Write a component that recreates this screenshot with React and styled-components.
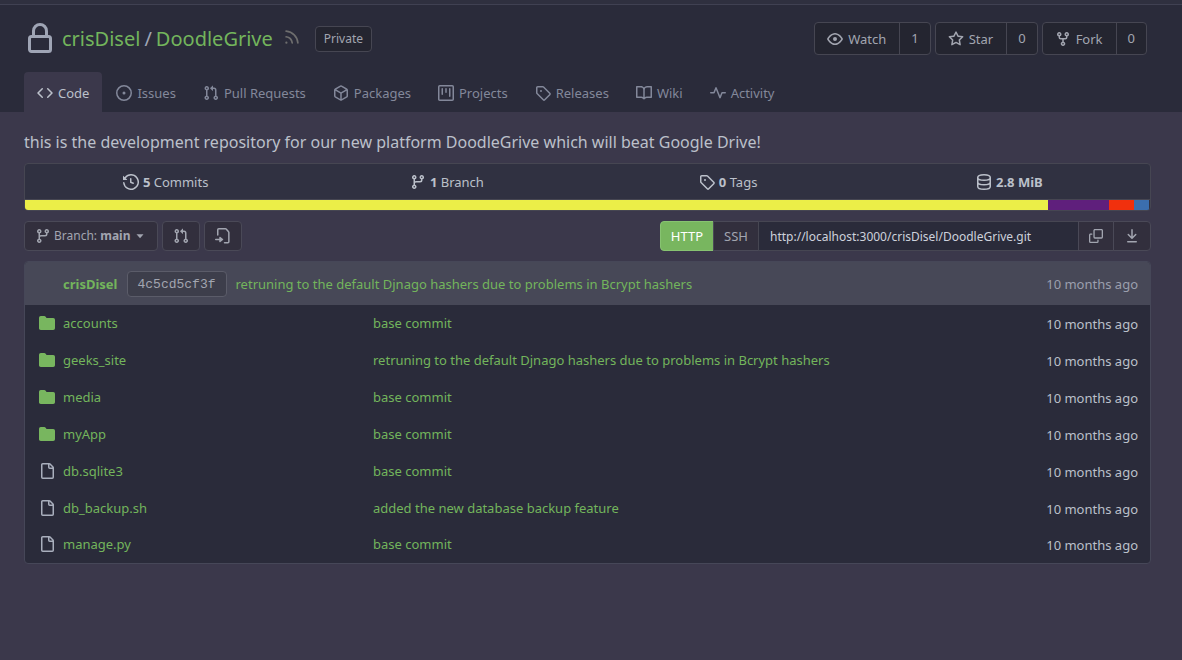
import React from 'react';
import styled, { createGlobalStyle, css } from 'styled-components';

const Global = createGlobalStyle`
  *, *::before, *::after { box-sizing: border-box; }
  body {
    margin: 0;
    background: #3b384b;
    color: #bbc0ca;
    font: 13px/20px "Noto Sans", sans-serif;
  }
  button, input { font: inherit; color: inherit; }
  button { cursor: pointer; }
  a { color: #73b55c; text-decoration: none; }
  a:hover { text-decoration: underline; }
`;

const paths = {
  lock: 'M4 4v2h-.25A1.75 1.75 0 002 7.75v5.5c0 .966.784 1.75 1.75 1.75h8.5A1.75 1.75 0 0014 13.25v-5.5A1.75 1.75 0 0012.25 6H12V4a4 4 0 10-8 0zm6.5 2V4a2.5 2.5 0 10-5 0v2h5zM12 7.5h.25a.25.25 0 01.25.25v5.5a.25.25 0 01-.25.25h-8.5a.25.25 0 01-.25-.25v-5.5a.25.25 0 01.25-.25H12z',
  rss: 'M2.002 2.725a.75.75 0 01.797-.699C8.79 2.42 13.58 7.21 13.974 13.201a.75.75 0 11-1.497.098 10.502 10.502 0 00-9.776-9.776.75.75 0 01-.7-.798zM2 13a1 1 0 112 0 1 1 0 01-2 0zm.84-5.95a.75.75 0 00-.179 1.489c2.509.3 4.5 2.291 4.8 4.8a.75.75 0 101.49-.178A7.003 7.003 0 002.838 7.05z',
  eye: 'M1.679 7.932c.412-.621 1.242-1.75 2.366-2.717C5.175 4.242 6.527 3.5 8 3.5c1.473 0 2.824.742 3.955 1.715 1.124.967 1.954 2.096 2.366 2.717a.119.119 0 010 .136c-.412.621-1.242 1.75-2.366 2.717C10.825 11.758 9.473 12.5 8 12.5c-1.473 0-2.824-.742-3.955-1.715C2.92 9.818 2.09 8.69 1.679 8.068a.119.119 0 010-.136zM8 2c-1.981 0-3.67.992-4.933 2.078C1.797 5.169.88 6.423.43 7.1a1.619 1.619 0 000 1.798c.45.678 1.367 1.932 2.637 3.024C4.329 13.008 6.019 14 8 14c1.981 0 3.67-.992 4.933-2.078 1.27-1.091 2.187-2.345 2.637-3.023a1.619 1.619 0 000-1.798c-.45-.678-1.367-1.932-2.637-3.023C11.671 2.992 9.981 2 8 2zm0 8a2 2 0 100-4 2 2 0 000 4z',
  star: 'M8 .25a.75.75 0 01.673.418l1.882 3.815 4.21.612a.75.75 0 01.416 1.279l-3.046 2.97.719 4.192a.75.75 0 01-1.088.791L8 12.347l-3.766 1.98a.75.75 0 01-1.088-.79l.72-4.194L.818 6.374a.75.75 0 01.416-1.28l4.21-.611L7.327.668A.75.75 0 018 .25zm0 2.445L6.615 5.5a.75.75 0 01-.564.41l-3.097.45 2.24 2.184a.75.75 0 01.216.664l-.528 3.084 2.769-1.456a.75.75 0 01.698 0l2.77 1.456-.53-3.084a.75.75 0 01.216-.664l2.24-2.183-3.096-.45a.75.75 0 01-.564-.41L8 2.694v.001z',
  fork: 'M5 3.25a.75.75 0 11-1.5 0 .75.75 0 011.5 0zm0 2.122a2.25 2.25 0 10-1.5 0v.878A2.25 2.25 0 005.75 8.5h1.5v2.128a2.251 2.251 0 101.5 0V8.5h1.5a2.25 2.25 0 002.25-2.25v-.878a2.25 2.25 0 10-1.5 0v.878a.75.75 0 01-.75.75h-4.5A.75.75 0 015 6.25v-.878zm3.75 7.378a.75.75 0 11-1.5 0 .75.75 0 011.5 0zm3-8.75a.75.75 0 100-1.5.75.75 0 000 1.5z',
  code: 'M4.72 3.22a.75.75 0 011.06 1.06L2.06 8l3.72 3.72a.75.75 0 11-1.06 1.06L.47 8.53a.75.75 0 010-1.06l4.25-4.25zm6.56 0a.75.75 0 10-1.06 1.06L13.94 8l-3.72 3.72a.75.75 0 101.06 1.06l4.25-4.25a.75.75 0 000-1.06l-4.25-4.25z',
  issue: 'M8 9.5a1.5 1.5 0 100-3 1.5 1.5 0 000 3zM8 0a8 8 0 100 16A8 8 0 008 0zM1.5 8a6.5 6.5 0 1113 0 6.5 6.5 0 01-13 0z',
  pull: 'M7.177 3.073L9.573.677A.25.25 0 0110 .854v4.792a.25.25 0 01-.427.177L7.177 3.427a.25.25 0 010-.354zM3.75 2.5a.75.75 0 100 1.5.75.75 0 000-1.5zm-2.25.75a2.25 2.25 0 113 2.122v5.256a2.251 2.251 0 11-1.5 0V5.372A2.25 2.25 0 011.5 3.25zM11 2.5h-1V4h1a1 1 0 011 1v5.628a2.251 2.251 0 101.5 0V5A2.5 2.5 0 0011 2.5zm1 10.25a.75.75 0 111.5 0 .75.75 0 01-1.5 0zM3.75 12a.75.75 0 100 1.5.75.75 0 000-1.5z',
  pkg: 'M8.878.392a1.75 1.75 0 00-1.756 0l-5.25 3.045A1.75 1.75 0 001 4.951v6.098c0 .624.332 1.2.872 1.514l5.25 3.045a1.75 1.75 0 001.756 0l5.25-3.045c.54-.313.872-.89.872-1.514V4.951c0-.624-.332-1.2-.872-1.514L8.878.392zM7.875 1.69a.25.25 0 01.25 0l4.63 2.685L8 7.133 3.245 4.375l4.63-2.685zM2.5 5.677v5.372c0 .09.047.171.125.216l4.625 2.683V8.432L2.5 5.677zm6.25 8.271l4.625-2.683a.25.25 0 00.125-.216V5.677L8.75 8.432v5.516z',
  project: 'M1.75 0A1.75 1.75 0 000 1.75v12.5C0 15.216.784 16 1.75 16h12.5A1.75 1.75 0 0016 14.25V1.75A1.75 1.75 0 0014.25 0H1.75zM1.5 1.75a.25.25 0 01.25-.25h12.5a.25.25 0 01.25.25v12.5a.25.25 0 01-.25.25H1.75a.25.25 0 01-.25-.25V1.75zM11.75 3a.75.75 0 00-.75.75v7.5a.75.75 0 001.5 0v-7.5a.75.75 0 00-.75-.75zm-8.25.75a.75.75 0 011.5 0v5.5a.75.75 0 01-1.5 0v-5.5zM8 3a.75.75 0 00-.75.75v3.5a.75.75 0 001.5 0v-3.5A.75.75 0 008 3z',
  tag: 'M2.5 7.775V2.75a.25.25 0 01.25-.25h5.025a.25.25 0 01.177.073l6.25 6.25a.25.25 0 010 .354l-5.025 5.025a.25.25 0 01-.354 0l-6.25-6.25a.25.25 0 01-.073-.177zm-1.5 0V2.75C1 1.784 1.784 1 2.75 1h5.025c.464 0 .91.184 1.238.513l6.25 6.25a1.75 1.75 0 010 2.474l-5.026 5.026a1.75 1.75 0 01-2.474 0l-6.25-6.25A1.75 1.75 0 011 7.775zM6 5a1 1 0 100 2 1 1 0 000-2z',
  book: 'M0 1.75A.75.75 0 01.75 1h4.253c1.227 0 2.317.59 3 1.501A3.744 3.744 0 0111.006 1h4.245a.75.75 0 01.75.75v10.5a.75.75 0 01-.75.75h-4.507a2.25 2.25 0 00-1.591.659l-.622.621a.75.75 0 01-1.06 0l-.622-.621A2.25 2.25 0 005.258 13H.75a.75.75 0 01-.75-.75V1.75zm8.755 3a2.25 2.25 0 012.25-2.25H14.5v9h-3.757c-.71 0-1.4.201-1.992.572l.004-7.322zm-1.504 7.324l.004-5.073-.002-2.253A2.25 2.25 0 005.003 2.5H1.5v9h3.757a3.75 3.75 0 011.994.574z',
  pulse: 'M6 2a.75.75 0 01.696.471L10 10.731l1.304-3.26A.75.75 0 0112 7h3.25a.75.75 0 010 1.5h-2.742l-1.812 4.528a.75.75 0 01-1.392 0L6 4.77 4.696 8.03A.75.75 0 014 8.5H.75a.75.75 0 010-1.5h2.742l1.812-4.529A.75.75 0 016 2z',
  history: 'M1.643 3.143L.427 1.927A.25.25 0 000 2.104V5.75c0 .138.112.25.25.25h3.646a.25.25 0 00.177-.427L2.715 4.215a6.5 6.5 0 11-1.18 4.458.75.75 0 10-1.493.154 8.001 8.001 0 101.6-5.684zM7.75 4a.75.75 0 01.75.75v2.992l2.028.812a.75.75 0 01-.557 1.392l-2.5-1A.75.75 0 017 8.25v-3.5A.75.75 0 017.75 4z',
  branch: 'M11.75 2.5a.75.75 0 100 1.5.75.75 0 000-1.5zm-2.25.75a2.25 2.25 0 113 2.122V6A2.5 2.5 0 0110 8.5H6a1 1 0 00-1 1v1.128a2.251 2.251 0 11-1.5 0V5.372a2.25 2.25 0 111.5 0v1.836A2.492 2.492 0 016 7h4a1 1 0 001-1v-.628A2.25 2.25 0 019.5 3.25zM4.25 12a.75.75 0 100 1.5.75.75 0 000-1.5zM3.5 3.25a.75.75 0 111.5 0 .75.75 0 01-1.5 0z',
  copy: 'M0 6.75C0 5.784.784 5 1.75 5h1.5a.75.75 0 010 1.5h-1.5a.25.25 0 00-.25.25v7.5c0 .138.112.25.25.25h7.5a.25.25 0 00.25-.25v-1.5a.75.75 0 011.5 0v1.5A1.75 1.75 0 019.25 16h-7.5A1.75 1.75 0 010 14.25v-7.5zM5 1.75C5 .784 5.784 0 6.75 0h7.5C15.216 0 16 .784 16 1.75v7.5A1.75 1.75 0 0114.25 11h-7.5A1.75 1.75 0 015 9.25v-7.5zm1.75-.25a.25.25 0 00-.25.25v7.5c0 .138.112.25.25.25h7.5a.25.25 0 00.25-.25v-7.5a.25.25 0 00-.25-.25h-7.5z',
  download: 'M7.47 10.78a.75.75 0 001.06 0l3.75-3.75a.75.75 0 00-1.06-1.06L8.75 8.44V1.75a.75.75 0 00-1.5 0v6.69L4.78 5.97a.75.75 0 00-1.06 1.06l3.75 3.75zM3.75 13a.75.75 0 000 1.5h8.5a.75.75 0 000-1.5h-8.5z',
  folder: 'M1.75 1A1.75 1.75 0 000 2.75v10.5C0 14.216.784 15 1.75 15h12.5A1.75 1.75 0 0016 13.25v-8.5A1.75 1.75 0 0014.25 3h-6.5a.25.25 0 01-.2-.1l-.9-1.2c-.33-.44-.85-.7-1.4-.7h-3.5z',
  file: 'M2 1.75C2 .784 2.784 0 3.75 0h6.586c.464 0 .909.184 1.237.513l2.914 2.914c.329.328.513.773.513 1.237v9.586A1.75 1.75 0 0113.25 16h-9.5A1.75 1.75 0 012 14.25V1.75zm1.75-.25a.25.25 0 00-.25.25v12.5c0 .138.112.25.25.25h9.5a.25.25 0 00.25-.25V6h-2.75A1.75 1.75 0 019 4.25V1.5H3.75zm6.75.062V4.25c0 .138.112.25.25.25h2.688a.252.252 0 00-.011-.013l-2.914-2.914a.272.272 0 00-.013-.011z',
  caret: 'M4 6h8l-4 4.5z',
};

const strokes = {
  database: 'M1.75 3.5C1.75 1.98 4.55.75 8 .75s6.25 1.23 6.25 2.75S11.45 6.25 8 6.25 1.75 5.02 1.75 3.5zv9c0 1.52 2.8 2.75 6.25 2.75s6.25-1.23 6.25-2.75v-9M1.75 8c0 1.52 2.8 2.75 6.25 2.75S14.25 9.52 14.25 8',
  gotoFile: 'M2.75 7V1.75a1 1 0 011-1h6.7a1 1 0 01.7.3l2.4 2.8a1 1 0 01.3.7v9.2a1 1 0 01-1 1H9.5M.75 11.5H6M5 9.5l2.5 2L5 13.5z',
};

const Svg = styled.svg`
  display: block;
  flex: none;
  width: ${(p) => p.$size}px;
  height: ${(p) => p.$size}px;
  fill: currentColor;
`;

function Icon({ name, size = 16 }) {
  return (
    <Svg viewBox="0 0 16 16" $size={size} aria-hidden="true">
      {paths[name] ? (
        <path fillRule="evenodd" d={paths[name]} />
      ) : (
        <path d={strokes[name]} fill="none" stroke="currentColor" strokeWidth="1.5" strokeLinecap="round" strokeLinejoin="round" />
      )}
    </Svg>
  );
}

const Header = styled.header`
  background: #2a2b3a;
`;

const TopBar = styled.div`
  height: 5px;
  background: #2f303f;
  border-bottom: 1px solid #404152;
`;

const Container = styled.div`
  padding: 0 31px 0 24px;
`;

const TitleRow = styled.div`
  display: flex;
  align-items: center;
  justify-content: space-between;
  height: 67px;
  padding-right: 4px;
`;

const Title = styled.div`
  display: flex;
  align-items: center;
  color: #9fa5b5;
`;

const RepoName = styled.h1`
  margin: 0 10px 0 6px;
  font-size: 20px;
  line-height: 32px;
  font-weight: 400;
`;

const Slash = styled.span`
  margin: 0 4px;
`;

const FeedLink = styled.a`
  padding-bottom: 4px;
  color: #6e6e6e;
`;

const Label = styled.span`
  margin-left: 14px;
  padding: 2px 8px;
  border: 1px solid #464652;
  border-radius: 4px;
  background: #242530;
  color: #a2a5b0;
  font-size: 12px;
  line-height: 20px;
`;

const Actions = styled.div`
  display: flex;
  gap: 4px;
`;

const Split = styled.div`
  display: flex;
  border: 1px solid #464652;
  border-radius: 4px;
  background: #242530;
  color: #a2a5b0;
`;

const ActionButton = styled.button`
  display: flex;
  align-items: center;
  gap: 5px;
  height: 31px;
  padding: 0 13px 0 12px;
  border: 0;
  background: none;
  font-size: 13px;
`;

const Count = styled.a`
  padding: 0 11px;
  border-left: 1px solid #464652;
  color: inherit;
  line-height: 31px;
`;

const Tabs = styled.nav`
  display: flex;
  gap: 1px;
`;

const Tab = styled.a`
  display: flex;
  align-items: center;
  gap: 5px;
  height: 40px;
  padding: 1px 13px 0;
  border-radius: 4px 4px 0 0;
  color: #83889a;
  ${(p) =>
    p.$active &&
    css`
      background: #3b384b;
      color: #bbc0ca;
    `}
`;

const Description = styled.p`
  margin: 0;
  padding: 19px 0 10px;
  font-size: 16px;
  line-height: 22px;
`;

const Stats = styled.section`
  border: 1px solid #464652;
  border-radius: 4px;
  overflow: hidden;
  background: #303141;
`;

const StatRow = styled.div`
  display: grid;
  grid-template-columns: repeat(4, 1fr);
  height: 35px;
`;

const Stat = styled.a`
  display: flex;
  align-items: center;
  justify-content: center;
  gap: 4px;
  color: #bbc0ca;
`;

const LanguageBar = styled.div`
  display: flex;
  height: 11px;
  padding-right: 1px;
  border-top: 1px solid #464652;
`;

const Language = styled.div`
  flex: ${(p) => p.$share} 0 0;
  background: ${(p) => p.$color};
`;

const Toolbar = styled.div`
  display: flex;
  justify-content: space-between;
  padding: 10px 0;
`;

const ToolGroup = styled.div`
  display: flex;
  gap: 4px;
`;

const ToolButton = styled.button`
  display: flex;
  align-items: center;
  justify-content: center;
  gap: 3px;
  height: 30px;
  padding: 0 10px;
  border: 1px solid #4a4957;
  border-radius: 4px;
  background: #322f3d;
  color: #a2a5b0;
  font-size: 12px;
`;

const CloneGroup = styled.div`
  display: flex;

  & > * { border-radius: 0; margin-left: -1px; }
  & > :first-child { border-radius: 4px 0 0 4px; margin-left: 0; }
  & > :last-child { border-radius: 0 4px 4px 0; }
`;

const CloneButton = styled(ToolButton)`
  font-size: 13px;
  ${(p) =>
    p.$active &&
    css`
      border-color: #87c371;
      background: #78b65f;
      color: #fff;
    `}
`;

const CloneUrl = styled.input`
  width: 321px;
  height: 30px;
  padding: 0 11px;
  border: 1px solid #464652;
  background: #2a2b3a;
  color: #ced2dc;
  font-size: 12px;
  outline: 0;
`;

const Files = styled.section`
  border: 1px solid #464758;
  border-radius: 4px;
  overflow: hidden;
  background: #2a2b3a;
`;

const Commit = styled.div`
  display: flex;
  align-items: center;
  height: 43px;
  padding: 0 12px 0 38px;
  background: #474857;
`;

const Sha = styled.a`
  margin: 0 9px;
  padding: 3px 10px 1px;
  border: 1px solid #5b5c69;
  border-radius: 4px;
  background: #3d3e4b;
  color: #a2a5b0;
  font: 13px/20px "Liberation Mono", monospace;
`;

const Age = styled.span`
  margin-left: auto;
  color: #9b9fad;
`;

const Table = styled.table`
  width: 100%;
  table-layout: fixed;
  border-collapse: collapse;

  tr:last-child td { height: 36px; }
`;

const Cell = styled.td`
  height: 37px;
  padding: 0 12px 2px 14px;
  width: ${(p) => p.$width || 'auto'};
`;

const AgeCell = styled(Cell)`
  padding-bottom: 0;
  text-align: right;
`;

const Entry = styled.span`
  display: flex;
  align-items: center;
  gap: 8px;
  color: ${(p) => (p.$folder ? '#78b65f' : '#a9afbd')};
`;

const tabs = [
  ['code', 'Code'],
  ['issue', 'Issues'],
  ['pull', 'Pull Requests'],
  ['pkg', 'Packages'],
  ['project', 'Projects'],
  ['tag', 'Releases'],
  ['book', 'Wiki'],
  ['pulse', 'Activity'],
];

const actions = [
  ['eye', 'Watch', 1],
  ['star', 'Star', 0],
  ['fork', 'Fork', 0],
];

const stats = [
  ['history', '5', ' Commits'],
  ['branch', '1', ' Branch'],
  ['tag', '0', ' Tags'],
  ['database', '2.8 MiB', ''],
];

const languages = [
  ['#ebee48', 1023],
  ['#5f1f7c', 61],
  ['#f1300d', 25],
  ['#3b6eae', 15],
];

const hashers = 'retruning to the default Djnago hashers due to problems in Bcrypt hashers';

const files = [
  ['folder', 'accounts', 'base commit'],
  ['folder', 'geeks_site', hashers],
  ['folder', 'media', 'base commit'],
  ['folder', 'myApp', 'base commit'],
  ['file', 'db.sqlite3', 'base commit'],
  ['file', 'db_backup.sh', 'added the new database backup feature'],
  ['file', 'manage.py', 'base commit'],
];

export default function App() {
  return (
    <>
      <Global />
      <Header>
        <TopBar />
        <Container>
          <TitleRow>
            <Title>
              <Icon name="lock" size={32} />
              <RepoName>
                <a href="#owner">crisDisel</a>
                <Slash>/</Slash>
                <a href="#repo">DoodleGrive</a>
              </RepoName>
              <FeedLink href="#feed" aria-label="RSS feed"><Icon name="rss" size={18} /></FeedLink>
              <Label>Private</Label>
            </Title>
            <Actions>
              {actions.map(([icon, label, count]) => (
                <Split key={label}>
                  <ActionButton type="button"><Icon name={icon} />{label}</ActionButton>
                  <Count href={`#${icon}`}>{count}</Count>
                </Split>
              ))}
            </Actions>
          </TitleRow>
          <Tabs>
            {tabs.map(([icon, label], i) => (
              <Tab key={label} href={`#${icon}`} $active={i === 0}><Icon name={icon} />{label}</Tab>
            ))}
          </Tabs>
        </Container>
      </Header>
      <Container as="main">
        <Description>
          this is the development repository for our new platform DoodleGrive which will beat Google Drive!
        </Description>
        <Stats>
          <StatRow>
            {stats.map(([icon, value, unit]) => (
              <Stat key={icon} href={`#${icon}`}>
                <Icon name={icon} />
                <span><b>{value}</b>{unit}</span>
              </Stat>
            ))}
          </StatRow>
          <LanguageBar>
            {languages.map(([color, share]) => <Language key={color} $color={color} $share={share} />)}
          </LanguageBar>
        </Stats>
        <Toolbar>
          <ToolGroup>
            <ToolButton type="button">
              <Icon name="branch" />
              <span>Branch: <b>main</b></span>
              <Icon name="caret" size={14} />
            </ToolButton>
            <ToolButton type="button" aria-label="New pull request"><Icon name="pull" /></ToolButton>
            <ToolButton type="button" aria-label="Go to file"><Icon name="gotoFile" /></ToolButton>
          </ToolGroup>
          <CloneGroup>
            <CloneButton type="button" $active>HTTP</CloneButton>
            <CloneButton type="button">SSH</CloneButton>
            <CloneUrl aria-label="Clone URL" readOnly value="http://localhost:3000/crisDisel/DoodleGrive.git" />
            <CloneButton type="button" aria-label="Copy URL"><Icon name="copy" size={14} /></CloneButton>
            <CloneButton type="button" aria-label="Download"><Icon name="download" /></CloneButton>
          </CloneGroup>
        </Toolbar>
        <Files>
          <Commit>
            <a href="#author"><b>crisDisel</b></a>
            <Sha href="#commit">4c5cd5cf3f</Sha>
            <a href="#message">{hashers}</a>
            <Age>10 months ago</Age>
          </Commit>
          <Table>
            <tbody>
              {files.map(([icon, name, message]) => (
                <tr key={name}>
                  <Cell $width="334px">
                    <Entry $folder={icon === 'folder'}>
                      <Icon name={icon} />
                      <a href={`#${name}`}>{name}</a>
                    </Entry>
                  </Cell>
                  <Cell><a href={`#${name}-commit`}>{message}</a></Cell>
                  <AgeCell $width="140px">10 months ago</AgeCell>
                </tr>
              ))}
            </tbody>
          </Table>
        </Files>
      </Container>
    </>
  );
}
